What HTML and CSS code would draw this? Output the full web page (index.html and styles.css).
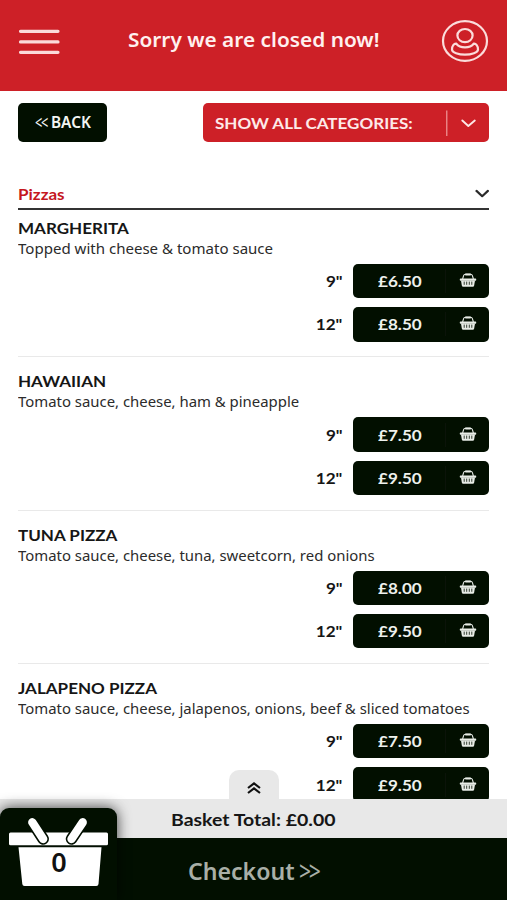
FILE: index.html
```
<!DOCTYPE html>
<html lang="en">
<head>
<meta charset="utf-8">
<title>Pizzas</title>
<link rel="stylesheet" href="styles.css">
</head>
<body>
<svg width="0" height="0" class="defs">
  <symbol id="basket" viewBox="0 0 18 16">
    <path d="M3.6 7 L4.6 3.6 Q5 2.3 6.4 2.3 H11.6 Q13 2.3 13.4 3.6 L14.4 7" fill="none" stroke="#e8ece6" stroke-width="1.1"/>
    <rect x="6" y="1.6" width="6" height="2" rx=".8" fill="#e8ece6"/>
    <rect x=".8" y="6.6" width="16.4" height="2.2" rx=".7" fill="#e8ece6"/>
    <path d="M2 8.4 H16 L15.1 13.7 Q14.9 14.8 13.9 14.8 H4.1 Q3.1 14.8 2.9 13.7 Z" fill="#e8ece6"/>
    <path d="M5.2 9.6 V12.8 M7.7 9.6 V12.8 M10.3 9.6 V12.8 M12.8 9.6 V12.8" stroke="#020f00" stroke-width=".8"/>
  </symbol>
</svg>
<div class="app">
  <header class="header">
    <svg class="menu" width="42" height="28" viewBox="0 0 42 28"><path d="M2.5 3.3H40M2.5 13.9H40M2.5 24.3H40" stroke="#fbdada" stroke-width="3.2" stroke-linecap="round"/></svg>
    <h1 class="notice"><span>Sorry we are closed now!</span></h1>
    <svg class="user" width="48" height="44" viewBox="0 0 48 44" fill="none" stroke="#fbdcdb" stroke-width="2.2">
      <ellipse cx="24" cy="22" rx="22" ry="19.8"/>
      <ellipse cx="24" cy="16.6" rx="7.6" ry="6.6"/>
      <path d="M15.3 24.7 C13 24.4 11 27 11 30.4 C11 33.4 17.5 35.7 24 35.7 S37 33.4 37 30.4 C37 27 35 24.4 32.7 24.7 C30.6 27.4 27.6 28.3 24 28.3 S17.4 27.4 15.3 24.7 Z"/>
    </svg>
  </header>
  <nav class="toolbar">
    <a class="back"><span class="laquo">&lt;&lt;</span><span class="back-label">BACK</span></a>
    <div class="categories">
      <span class="wide">SHOW ALL CATEGORIES:</span>
      <svg class="cat-arrow" width="43" height="28" viewBox="0 0 43 28" fill="none"><path d="M.8 1.5V27" stroke="#f2a5a5" stroke-width="1.1"/><path d="M16.3 11.5L22.3 17L28.8 11.5" stroke="#fde7e6" stroke-width="1.9" stroke-linecap="round" stroke-linejoin="round"/></svg>
    </div>
  </nav>
  <main class="menu-list">
    <div class="section"><h2 class="wide">Pizzas</h2>
      <svg width="14" height="9" viewBox="0 0 14 9"><path d="M1.5 1.9L7.2 7.2L12.9 1.9" fill="none" stroke="#2a2a2a" stroke-width="2.2" stroke-linecap="round" stroke-linejoin="round"/></svg>
    </div>
    <article class="item">
      <h3 class="wide">MARGHERITA</h3><p class="first">Topped with cheese &amp; tomato sauce</p>
      <div class="row"><span class="size">9"</span><a class="price"><b>£6.50</b><i></i><svg><use href="#basket"/></svg></a></div>
      <div class="row"><span class="size">12"</span><a class="price"><b>£8.50</b><i></i><svg><use href="#basket"/></svg></a></div>
    </article>
    <article class="item">
      <h3 class="wide">HAWAIIAN</h3><p>Tomato sauce, cheese, ham &amp; pineapple</p>
      <div class="row"><span class="size">9"</span><a class="price"><b>£7.50</b><i></i><svg><use href="#basket"/></svg></a></div>
      <div class="row"><span class="size">12"</span><a class="price"><b>£9.50</b><i></i><svg><use href="#basket"/></svg></a></div>
    </article>
    <article class="item">
      <h3 class="wide">TUNA PIZZA</h3><p>Tomato sauce, cheese, tuna, sweetcorn, red onions</p>
      <div class="row"><span class="size">9"</span><a class="price"><b>£8.00</b><i></i><svg><use href="#basket"/></svg></a></div>
      <div class="row"><span class="size">12"</span><a class="price"><b>£9.50</b><i></i><svg><use href="#basket"/></svg></a></div>
    </article>
    <article class="item">
      <h3 class="wide">JALAPENO PIZZA</h3><p>Tomato sauce, cheese, jalapenos, onions, beef &amp; sliced tomatoes</p>
      <div class="row"><span class="size">9"</span><a class="price"><b>£7.50</b><i></i><svg><use href="#basket"/></svg></a></div>
      <div class="row"><span class="size">12"</span><a class="price"><b>£9.50</b><i></i><svg><use href="#basket"/></svg></a></div>
    </article>
  </main>
  <footer class="footer">
    <div class="tab"><svg width="14" height="14" viewBox="0 0 14 14"><path d="M1 7L7 2.4L13 7M1 12L7 7.4L13 12" fill="none" stroke="#111" stroke-width="2.2"/></svg></div>
    <div class="total"><span>Basket Total: £0.00</span></div>
    <div class="checkout"><span class="checkout-label">Checkout</span><span class="raquo">&gt;&gt;</span></div>
    <div class="basket-box">
      <svg width="116" height="92" viewBox="0 0 116 92">
        <rect x="9" y="24.5" width="99" height="12.7" rx="1.5" fill="#fff"/>
        <path d="M18.5 39.3H101.5L98.5 76Q98.3 78 96.3 78H24.5Q22.5 78 22.3 76Z" fill="#fff"/>
        <g stroke-linecap="round"><path d="M32.3 14.3L43.2 31M82.7 14.3L71.5 31" stroke="#020f00" stroke-width="11.5"/><path d="M32.3 14.3L43.2 31M82.7 14.3L71.5 31" stroke="#fff" stroke-width="8.4"/></g>
      </svg>
      <span class="count">0</span>
    </div>
  </footer>
</div>
</body>
</html>
```
FILE: styles.css
```
* { box-sizing: border-box; margin: 0; padding: 0; }
html, body { height: 900px; overflow: hidden; background: #fff; }
body { font-family: Lato, "Noto Sans", sans-serif; color: #161616; }
.defs { position: absolute; }
.app { position: relative; width: 507px; height: 900px; overflow: hidden; }
svg { display: block; flex: none; }
.wide { display: block; transform: scaleX(1.135); transform-origin: 0 50%; font-size: 15px; font-weight: 700; white-space: nowrap; }

.header { display: flex; align-items: center; justify-content: space-between; height: 90.5px; padding: 0 18px; background: #cd2027; }
.menu { margin-top: -7px; }
.user { margin: -9px 0 0; }
.notice { font: 600 20.5px/28px "Noto Sans", sans-serif; color: #fff0ef; margin: -12px 0 0 7px; white-space: nowrap; }
.notice span { display: block; transform: scaleX(1.016); }

.toolbar { display: flex; justify-content: space-between; padding: 12px 18px 0 17.5px; height: 92px; }
.back { display: flex; align-items: center; width: 89px; height: 39.5px; padding-left: 17px; border-radius: 5px; background: #020f00; color: #f3f5f2; font: 600 16px/1 "Noto Sans", sans-serif; }
.laquo { width: 16px; font-size: 15px; font-weight: 400; letter-spacing: -1.5px; transform: scale(.85, 1.25); transform-origin: 0 50%; }
.back-label { transform: scaleX(.96); transform-origin: 0 50%; }
.categories { display: flex; align-items: center; justify-content: space-between; width: 286px; height: 39.5px; padding: 1px 0 0 11.5px; border-radius: 5px; background: #cd2027; color: #fdeae9; }

.menu-list { padding: 0 18px 0 17.5px; }
.section { display: flex; align-items: center; justify-content: space-between; height: 27.5px; padding-bottom: 3px; border-bottom: 2px solid #333; }
.section h2 { color: #c5161d; line-height: 20px; }
.item { padding: 14px 0 14.7px; border-bottom: 1px solid #e9e9e9; height: 153.33px; }
.section + .item { padding-top: 8px; height: 147.4px; }
.item h3 { line-height: 20px; }
.item p { font: 15px/20px "Noto Sans", sans-serif; color: #2b2b2b; white-space: nowrap; margin-bottom: 6px; transform: scaleX(.993); transform-origin: 0 50%; }
.item .first { transform: scaleX(1.003); }
.row { display: flex; justify-content: flex-end; align-items: center; height: 34.4px; margin-bottom: 8.9px; }
.size { font-size: 15px; font-weight: 700; margin-right: 10.5px; transform: scaleX(1.14); transform-origin: 100% 50%; }
.price { display: flex; align-items: center; width: 136px; height: 34.4px; padding-left: 25px; border-radius: 5px; background: #020f00; color: #eef1ed; }
.price b { width: 67px; font-size: 15px; transform: scaleX(1.14); transform-origin: 0 50%; }
.price i { width: 1px; height: 24px; background: #0b1309; }
.price svg { width: 18px; height: 16px; margin-left: 12.5px; margin-top: -2px; }

.footer { position: absolute; left: 0; right: 0; bottom: 0; }
.tab { display: flex; justify-content: center; width: 50px; height: 29px; margin-left: 229px; padding-top: 11px; border-radius: 10px 10px 0 0; background: #e8e8e8; }
.total { height: 39px; padding-left: 171px; background: #e8e8e8; font: 700 17px/41px Lato, sans-serif; }
.total span { display: inline-block; transform: scaleX(1.145); transform-origin: 0 50%; white-space: nowrap; }
.checkout { display: flex; align-items: center; height: 62px; padding: 4px 0 0 188px; background: #020f00; color: #a9afa7; font: 600 23px/1 "Noto Sans", sans-serif; }
.checkout-label { width: 110.5px; transform: scaleX(1.005); transform-origin: 0 50%; }
.raquo { font-weight: 400; letter-spacing: -2.5px; transform: scale(.92, 1.15); transform-origin: 0 50%; }
.basket-box { position: absolute; left: 0; bottom: 0; width: 116.5px; height: 92px; border-radius: 9px 9px 0 0; background: #020f00; box-shadow: 0 0 14px rgba(0, 0, 0, .75); }
.count { position: absolute; left: 0; width: 118px; top: 38px; text-align: center; font: 600 27px/32px "Noto Sans", sans-serif; color: #111; }
```
